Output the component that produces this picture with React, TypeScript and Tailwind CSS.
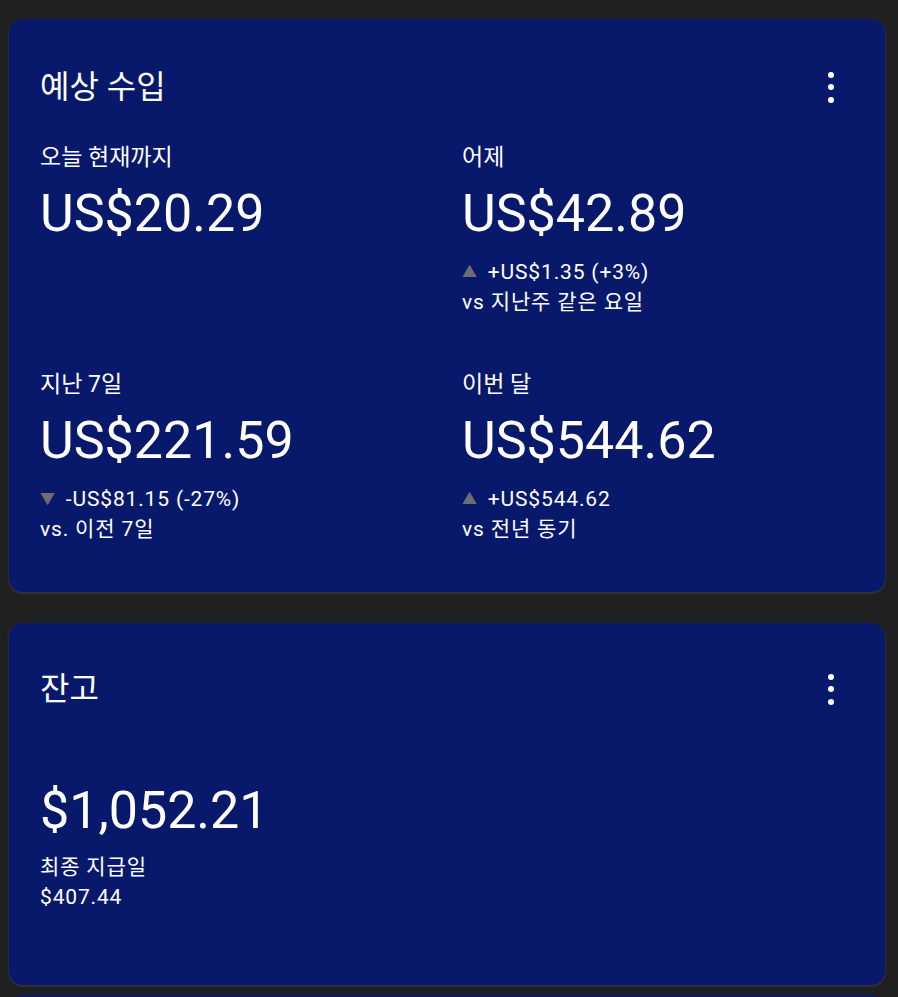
const FONT = "font-['Roboto','Noto_Sans_CJK_KR',sans-serif]";

type Delta = { dir: "up" | "down"; text: string; vs: string };

type Stat = { label: string; amount: string; delta?: Delta };

const STATS: Stat[] = [
  { label: "오늘 현재까지", amount: "US$20.29" },
  {
    label: "어제",
    amount: "US$42.89",
    delta: { dir: "up", text: "+US$1.35 (+3%)", vs: "vs 지난주 같은 요일" },
  },
  {
    label: "지난 7일",
    amount: "US$221.59",
    delta: { dir: "down", text: "-US$81.15 (-27%)", vs: "vs. 이전 7일" },
  },
  {
    label: "이번 달",
    amount: "US$544.62",
    delta: { dir: "up", text: "+US$544.62", vs: "vs 전년 동기" },
  },
];

function Kebab() {
  return (
    <div className="mr-[11px] flex w-6 flex-col items-center gap-[6.5px]">
      <span className="h-[6px] w-[6px] rounded-full bg-white" />
      <span className="h-[6px] w-[6px] rounded-full bg-white" />
      <span className="h-[6px] w-[6px] rounded-full bg-white" />
    </div>
  );
}

function CardHeader({ title }: { title: string }) {
  return (
    <div className="flex items-center justify-between">
      <h2 className="text-[32px] leading-[36px] font-normal text-white">{title}</h2>
      <Kebab />
    </div>
  );
}

function StatBlock({ stat }: { stat: Stat }) {
  return (
    <div>
      <div className="text-[23px] leading-[30px] text-white">{stat.label}</div>
      <div className="mt-[11px] text-[52px] leading-[60px] text-white">{stat.amount}</div>
      {stat.delta && (
        <div className="mt-[13px] text-[21px] leading-[30px] tracking-[0.04em] text-white">
          <div className="flex items-center">
            <span className="mr-[10px] text-[15px] text-[#6e6e6e]">
              {stat.delta.dir === "up" ? "▲" : "▼"}
            </span>
            <span>{stat.delta.text}</span>
          </div>
          <div>{stat.delta.vs}</div>
        </div>
      )}
    </div>
  );
}

export default function App() {
  return (
    <div className={`min-h-[997px] overflow-hidden bg-[#202020] ${FONT}`}>
      <section className="mt-[19px] mr-[13px] ml-[9px] rounded-[14px] bg-[#08196c] pt-[50px] pr-[31px] pb-[48px] pl-[31px] shadow-[0_1px_3px_rgba(120,120,160,0.35)]">
        <CardHeader title="예상 수입" />
        <div className="mt-[38px] grid grid-cols-2 gap-x-[30px] gap-y-[53px]">
          {STATS.map((s) => (
            <StatBlock key={s.label} stat={s} />
          ))}
        </div>
      </section>

      <section className="mt-[31px] mr-[13px] ml-[9px] rounded-[14px] bg-[#08196c] pt-[48px] pr-[31px] pb-[73px] pl-[31px] shadow-[0_1px_3px_rgba(120,120,160,0.35)]">
        <CardHeader title="잔고" />
        <div className="mt-[74px] text-[52px] leading-[60px] text-white">$1,052.21</div>
        <div className="mt-[11px] text-[21px] leading-[30px] tracking-[0.04em] text-white">
          <div>최종 지급일</div>
          <div>$407.44</div>
        </div>
      </section>

      <section className="mt-[10px] mr-[13px] ml-[9px] h-[200px] rounded-[14px] bg-[#08196c]" />
    </div>
  );
}
